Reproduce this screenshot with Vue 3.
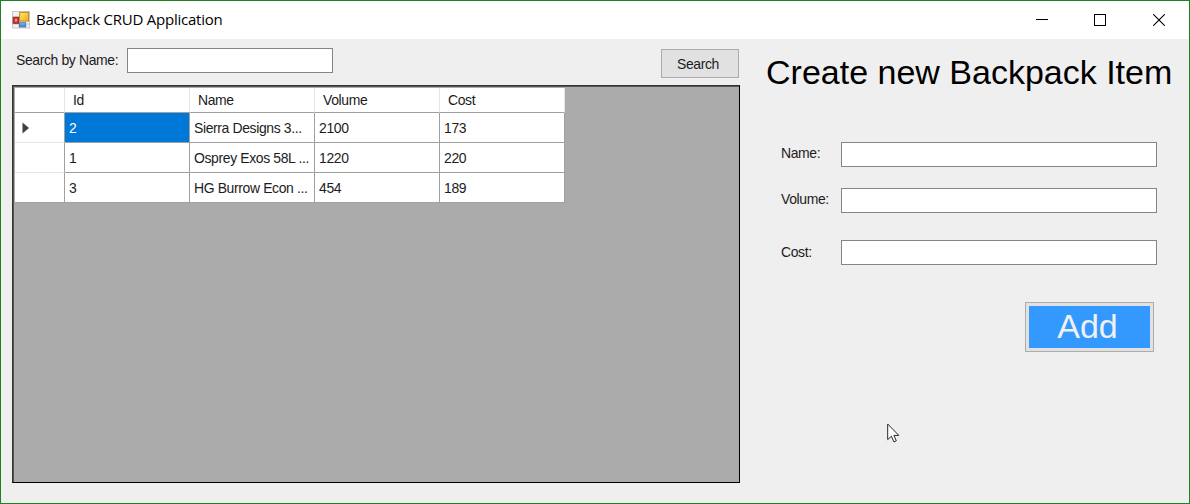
<script setup>
import { ref } from 'vue'

const query = ref('')
const columns = ['Id', 'Name', 'Volume', 'Cost']
const items = [
  { id: 2, name: 'Sierra Designs 3...', volume: 2100, cost: 173 },
  { id: 1, name: 'Osprey Exos 58L ...', volume: 1220, cost: 220 },
  { id: 3, name: 'HG Burrow Econ ...', volume: 454, cost: 189 },
]
const form = ref({ name: '', volume: '', cost: '' })
</script>

<template>
  <div class="window">
    <header class="titlebar">
      <svg class="app-icon" width="18" height="18" viewBox="0 0 18 18">
        <defs>
          <linearGradient id="gold" x1="0" y1="0" x2="1" y2="1">
            <stop offset="0" stop-color="#ffe480" /><stop offset="1" stop-color="#eeae10" />
          </linearGradient>
          <linearGradient id="blue" x1="0" y1="0" x2="0" y2="1">
            <stop offset="0" stop-color="#8dbdf5" /><stop offset="1" stop-color="#3674cf" />
          </linearGradient>
        </defs>
        <rect x=".5" y=".5" width="17" height="16.5" fill="#f1f1f1" stroke="#c8c8c8" />
        <path d="M1 6H7M1 13H17M7 13V17M14 13V17" stroke="#c4c4c4" fill="none" />
        <rect x="1.2" y="6.3" width="5.4" height="6" fill="#c93a35" stroke="#9d2220" />
        <rect x="3" y="8" width="2" height="2.4" fill="#ee9b91" />
        <rect x="7.6" y="1.3" width="9" height="8.8" fill="url(#gold)" stroke="#b88a20" />
        <rect x="7.5" y="11.7" width="6" height="4.2" fill="url(#blue)" stroke="#4b7cc4" />
      </svg>
      <span class="title">Backpack CRUD Application</span>
      <div class="controls">
        <svg width="12" height="12" viewBox="0 0 12 12"><path d="M0 5.5H12" stroke="#000" /></svg>
        <svg width="12" height="12" viewBox="0 0 12 12"><rect x=".5" y=".5" width="11" height="11" fill="none" stroke="#000" /></svg>
        <svg class="close" width="12" height="12" viewBox="0 0 12 12"><path d="M.3 .3L11.7 11.7M11.7 .3L.3 11.7" stroke="#000" stroke-width="1.1" /></svg>
      </div>
    </header>

    <main class="body">
      <section class="left">
        <div class="search-row">
          <label class="search-label"><span class="t">Search by Name:</span></label>
          <input v-model="query" class="search-input" />
          <button class="search-btn"><span class="t">Search</span></button>
        </div>
        <div class="grid">
          <div class="row head">
            <div class="cell marker"></div>
            <div v-for="c in columns" :key="c" class="cell"><span class="t">{{ c }}</span></div>
          </div>
          <div v-for="(item, i) in items" :key="item.id" class="row">
            <div class="cell marker">
              <svg v-if="i === 0" width="8" height="12" viewBox="0 0 8 12"><path d="M.5 .5L7 6L.5 11.5Z" fill="#404040" /></svg>
            </div>
            <div class="cell" :class="{ selected: i === 0 }"><span class="t">{{ item.id }}</span></div>
            <div class="cell"><span class="t">{{ item.name }}</span></div>
            <div class="cell"><span class="t">{{ item.volume }}</span></div>
            <div class="cell"><span class="t">{{ item.cost }}</span></div>
          </div>
        </div>
      </section>

      <section class="right">
        <h1>Create new Backpack Item</h1>
        <div class="field f-name"><label><span class="t">Name:</span></label><input v-model="form.name" /></div>
        <div class="field f-volume"><label><span class="t">Volume:</span></label><input v-model="form.volume" /></div>
        <div class="field f-cost"><label><span class="t">Cost:</span></label><input v-model="form.cost" /></div>
        <button class="add-btn">Add</button>
      </section>
    </main>

    <svg class="cursor" width="13" height="20" viewBox="0 0 13 20">
      <path d="M.7 1V16.6L4.4 13.2L6.9 18.9L9.3 17.8L6.9 12.4H11.8Z" fill="#fff" stroke="#25252d" stroke-width="1" />
    </svg>
  </div>
</template>

<style>
body { margin: 0; overflow: hidden; }
</style>

<style scoped>
* { box-sizing: border-box; }
.window {
  position: relative;
  width: 1190px;
  height: 504px;
  border: 1px solid #228022;
  background: #efefef;
  display: flex;
  flex-direction: column;
  font: 15px/18px "Liberation Sans", Arial, sans-serif;
  color: #1c1c1c;
  letter-spacing: -0.4px;
  white-space: nowrap;
}
.t { display: inline-block; transform: scaleX(0.93); transform-origin: 0 50%; }
.titlebar {
  height: 38px;
  flex: none;
  display: flex;
  align-items: center;
  padding: 0 24px 0 11px;
  background: #fff;
}
.title {
  margin: -2px 0 0 6px;
  font: 15px/20px "Open Sans", "Noto Sans", sans-serif;
  letter-spacing: -0.23px;
  color: #000;
}
.controls { margin-left: auto; display: flex; gap: 46px; }
.controls svg { display: block; }
.controls .close { margin-left: 1px; }
.body { display: flex; flex: 1; }
.left { width: 728px; margin-left: 11px; flex: none; }
.search-row { display: flex; height: 46px; align-items: flex-start; }
.search-label { width: 111px; margin-left: 4px; padding-top: 12px; }
input {
  height: 25px;
  border: 1px solid #858585;
  background: #fff;
  padding: 2px 4px;
  margin: 0;
  border-radius: 0;
  outline: none;
  font: inherit;
}
.search-input { width: 206px; margin-top: 9px; }
button { font: inherit; letter-spacing: inherit; color: inherit; padding: 0; border-radius: 0; }
.search-btn {
  width: 78px;
  height: 29px;
  margin: 10px 1px 0 auto;
  border: 1px solid #adadad;
  background: #e1e1e1;
  text-align: left;
  padding-left: 15px;
}
.grid {
  height: 398px;
  border: 1px solid #333;
  border-right-color: #000;
  border-bottom-color: #000;
  box-shadow: inset 1px 1px #555;
  background: #ababab;
  padding: 2px 0 0 2px;
}
.row {
  display: grid;
  grid-template-columns: 50px 125px 125px 125px 125px;
  grid-template-rows: 100%;
  width: 550px;
  height: 30px;
}
.row.head { height: 25px; }
.cell {
  padding-left: 4px;
  line-height: 29px;
  background: #fff;
  border-right: 1px solid #a0a0a0;
  border-bottom: 1px solid #a0a0a0;
}
.head .cell { padding-left: 8px; line-height: 24px; border-right-color: #e5e5e5; }
.cell.marker { border-bottom-color: #e5e5e5; padding: 9px 0 0 7px; line-height: 0; }
.head .cell.marker { border-bottom-color: #a0a0a0; }
.row:last-child .marker { border-bottom-color: #a0a0a0; }
.cell.selected { background: #0078d7; color: #fff; }
.right { flex: 1; display: flex; flex-direction: column; }
h1 {
  margin: 13px 0 0 26px;
  height: 41px;
  font: 34px/40px "Liberation Sans", Arial, sans-serif;
  letter-spacing: 0;
  color: #000;
}
.field { display: flex; height: 25px; margin-left: 41px; }
.field label { width: 60px; padding-top: 2px; }
.f-cost label { padding-top: 3px; }
.field input { width: 316px; }
.f-name { margin-top: 49px; }
.f-volume { margin-top: 21px; }
.f-cost { margin-top: 27px; }
.add-btn {
  width: 129px;
  height: 50px;
  margin: 37px 0 0 285px;
  border: 1px solid #adadad;
  background: #3399ff;
  box-shadow: inset 0 0 0 3px #e1e1e1;
  color: #f0f0f0;
  font-size: 34px;
  line-height: 46px;
  letter-spacing: 0;
  padding: 0 4px 2px 0;
}
.cursor { position: absolute; left: 886px; top: 422px; }
</style>
